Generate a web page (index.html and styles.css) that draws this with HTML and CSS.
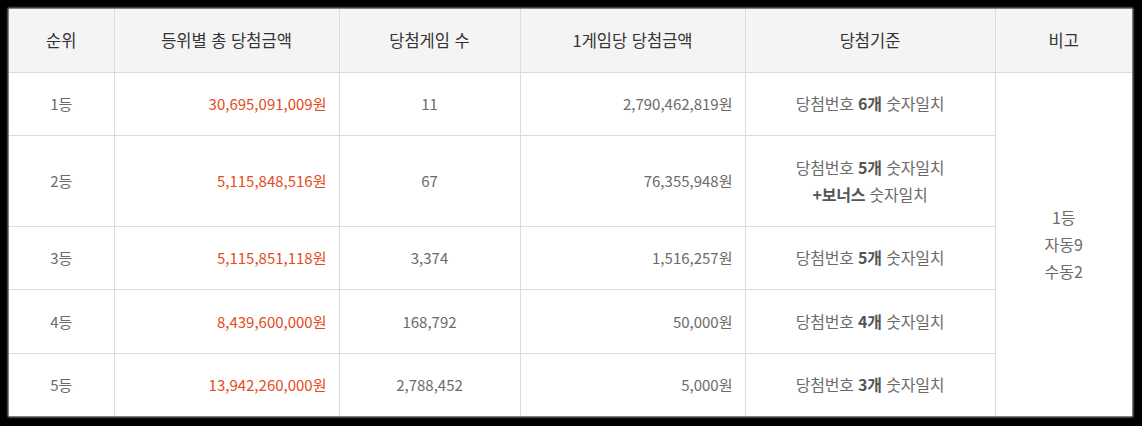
FILE: index.html
```html
<!DOCTYPE html>
<html lang="ko">
<head>
<meta charset="utf-8">
<title>당첨결과</title>
<link rel="stylesheet" href="styles.css">
</head>
<body>
<div class="frame">
  <table class="result">
    <colgroup>
      <col class="c-rank">
      <col class="c-total">
      <col class="c-games">
      <col class="c-per">
      <col class="c-rule">
      <col class="c-note">
    </colgroup>
    <thead>
      <tr>
        <th>순위</th>
        <th>등위별 총 당첨금액</th>
        <th>당첨게임 수</th>
        <th>1게임당 당첨금액</th>
        <th>당첨기준</th>
        <th>비고</th>
      </tr>
    </thead>
    <tbody>
      <tr>
        <td>1등</td>
        <td class="num red">30,695,091,009원</td>
        <td class="cnt">11</td>
        <td class="num">2,790,462,819원</td>
        <td class="rule">당첨번호 <strong>6개</strong> 숫자일치</td>
        <td class="note" rowspan="5">1등<br>자동9<br>수동2</td>
      </tr>
      <tr>
        <td>2등</td>
        <td class="num red">5,115,848,516원</td>
        <td class="cnt">67</td>
        <td class="num">76,355,948원</td>
        <td class="rule">당첨번호 <strong>5개</strong> 숫자일치<br><strong>+보너스</strong> 숫자일치</td>
      </tr>
      <tr>
        <td>3등</td>
        <td class="num red">5,115,851,118원</td>
        <td class="cnt">3,374</td>
        <td class="num">1,516,257원</td>
        <td class="rule">당첨번호 <strong>5개</strong> 숫자일치</td>
      </tr>
      <tr>
        <td>4등</td>
        <td class="num red">8,439,600,000원</td>
        <td class="cnt">168,792</td>
        <td class="num">50,000원</td>
        <td class="rule">당첨번호 <strong>4개</strong> 숫자일치</td>
      </tr>
      <tr>
        <td>5등</td>
        <td class="num red">13,942,260,000원</td>
        <td class="cnt">2,788,452</td>
        <td class="num">5,000원</td>
        <td class="rule">당첨번호 <strong>3개</strong> 숫자일치</td>
      </tr>
    </tbody>
  </table>
</div>
</body>
</html>
```

FILE: styles.css
```css
html, body {
  margin: 0;
  padding: 0;
  background: #000;
}

body {
  width: 1142px;
  height: 426px;
  overflow: hidden;
  font-family: "Noto Sans CJK KR", "Noto Sans", sans-serif;
}

.frame {
  margin: 9px 10px 0 9px;
  height: 407px;
  background: #fff;
  overflow: hidden;
  box-shadow: 0 0 2px 1px rgba(210, 210, 210, 0.9);
}

.result {
  width: 1123px;
  border-collapse: collapse;
  table-layout: fixed;
}

.c-rank { width: 105px; }
.c-total { width: 225px; }
.c-games { width: 181px; }
.c-per { width: 225px; }
.c-rule { width: 250px; }
.c-note { width: 137px; }

.result th,
.result td {
  border: 1px solid #dcdcdc;
  line-height: 27px;
  padding: 17.75px 12px;
  text-align: center;
  vertical-align: middle;
}

.result tr > :first-child { border-left: 0; }
.result tr > :last-child { border-right: 0; }
.result thead th { border-top: 0; }

.result th {
  background: #f4f4f4;
  color: #333;
  font-weight: 400;
  font-size: 16.5px;
}

.result td {
  color: #6b6b6b;
  font-size: 15px;
}

.result td.num {
  text-align: right;
}

.result td.red {
  color: #e44c22;
}

.result td.rule {
  font-size: 16px;
  letter-spacing: -0.2px;
}

.result td.rule strong {
  color: #555;
  font-weight: 700;
}

.result td.note {
  border-right: 0;
  font-size: 16px;
}
```
